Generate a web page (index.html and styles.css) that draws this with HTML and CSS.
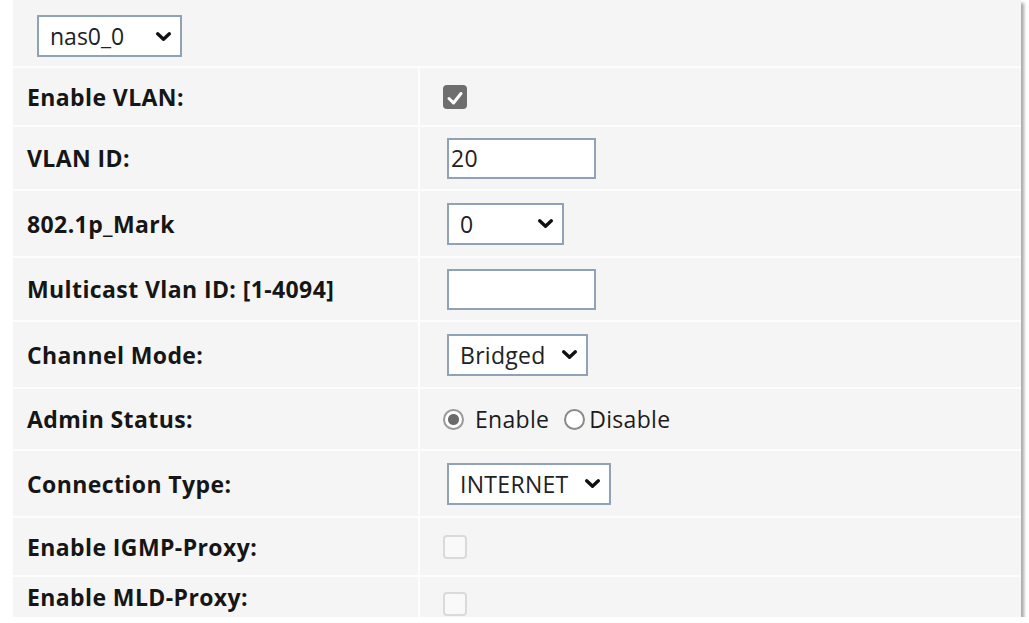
FILE: index.html
```html
<!DOCTYPE html>
<html lang="en">
<head>
    <meta charset="UTF-8">
    <meta name="viewport" content="width=device-width, initial-scale=1.0">
    <link rel="stylesheet" href="styles.css">
</head>
<body>

<div id="panel">
    <div class="row top">
        <span class="select ifaceSelect">nas0_0
            <svg class="chev" viewBox="0 0 16 10"><path d="M2.5 2.5 L8 7.5 L13.5 2.5" /></svg>
        </span>
    </div>

    <div class="row short">
        <div class="label">Enable VLAN:</div>
        <div class="value"><span class="check on">
            <svg viewBox="0 0 24 24"><path d="M6 12.5 L10.5 17 L18 7.5" /></svg>
        </span></div>
    </div>

    <div class="row">
        <div class="label">VLAN ID:</div>
        <div class="value"><span class="textbox">20</span></div>
    </div>

    <div class="row tall">
        <div class="label">802.1p_Mark</div>
        <div class="value"><span class="select markSelect">0
            <svg class="chev" viewBox="0 0 16 10"><path d="M2.5 2.5 L8 7.5 L13.5 2.5" /></svg>
        </span></div>
    </div>

    <div class="row">
        <div class="label">Multicast Vlan ID: [1-4094]</div>
        <div class="value"><span class="textbox"></span></div>
    </div>

    <div class="row tall">
        <div class="label">Channel Mode:</div>
        <div class="value"><span class="select">Bridged
            <svg class="chev" viewBox="0 0 16 10"><path d="M2.5 2.5 L8 7.5 L13.5 2.5" /></svg>
        </span></div>
    </div>

    <div class="row radioRow">
        <div class="label">Admin Status:</div>
        <div class="value">
            <span class="radio on"></span><span class="radioText first">Enable</span>
            <span class="radio"></span><span class="radioText">Disable</span>
        </div>
    </div>

    <div class="row tall">
        <div class="label">Connection Type:</div>
        <div class="value"><span class="select">INTERNET
            <svg class="chev" viewBox="0 0 16 10"><path d="M2.5 2.5 L8 7.5 L13.5 2.5" /></svg>
        </span></div>
    </div>

    <div class="row short">
        <div class="label">Enable IGMP-Proxy:</div>
        <div class="value"><span class="check off"></span></div>
    </div>

    <div class="row last">
        <div class="label">Enable MLD-Proxy:</div>
        <div class="value"><span class="check off"></span></div>
    </div>
</div>

</body>
</html>
```

FILE: styles.css
```css
body {
    margin: 0;
    background: #fff;
    font-family: "Open Sans", "Noto Sans", sans-serif;
    color: #1c1c1c;
}
#panel {
    margin-left: 13px;
    width: 1008px;
    height: 617px;
    overflow: hidden;
    background: #f5f5f5;
    box-shadow: 3px 3px 3px #a9a9a9;
}
.row {
    display: grid;
    grid-template-columns: 407px 1fr;
    height: 62px;
    border-bottom: 2px solid #fdfdfd;
}
.row.tall {
    height: 65px;
}
.row.short {
    height: 57px;
}
.row.radioRow {
    height: 60px;
}
.row.last {
    height: 40px;
    border-bottom: none;
}
.row.last .value {
    align-items: flex-start;
    padding-top: 15px;
}
.row.top {
    display: flex;
    align-items: center;
    box-sizing: border-box;
    height: 68px;
    padding: 6px 0 0 24px;
}
.label {
    display: flex;
    align-items: center;
    padding-left: 14px;
    font-weight: 700;
    font-size: 23px;
    letter-spacing: 0.4px;
    color: #161616;
    border-right: 2px solid #fdfdfd;
}
.value {
    display: flex;
    align-items: center;
    padding-left: 27px;
    font-size: 23px;
    letter-spacing: 0.3px;
}
.select, .textbox {
    display: inline-flex;
    align-items: center;
    box-sizing: border-box;
    height: 42px;
    background: #fff;
    border: 2px solid #8fa2b6;
    padding: 0 8px 0 11px;
    color: #222;
    font-size: 23px;
}
.textbox {
    width: 149px;
    height: 41px;
    padding-left: 2px;
}
.select {
    gap: 15px;
}
.ifaceSelect {
    width: 145px;
    justify-content: space-between;
}
.markSelect {
    width: 117px;
    justify-content: space-between;
}
.chev {
    width: 17px;
    height: 11px;
}
.chev path {
    fill: none;
    stroke: #111;
    stroke-width: 3.2;
    stroke-linecap: round;
    stroke-linejoin: round;
}
.check {
    display: inline-block;
    box-sizing: border-box;
    width: 24px;
    height: 24px;
    margin-left: -4px;
    border-radius: 4px;
}
.check.on {
    background: #6e6e6e;
}
.check.on svg {
    width: 24px;
    height: 24px;
}
.check.on path {
    fill: none;
    stroke: #fff;
    stroke-width: 3;
    stroke-linecap: round;
    stroke-linejoin: round;
}
.check.off {
    border: 2px solid #dadada;
    background: #f9f9f9;
}
.radio {
    display: inline-block;
    box-sizing: border-box;
    width: 21px;
    height: 21px;
    margin-left: -4px;
    border: 2px solid #8a8a8a;
    border-radius: 50%;
    background: #fff;
}
.radio.on {
    border-color: #999;
    background: radial-gradient(circle, #6b6b6b 0 5px, #fff 6px);
}
.radioText {
    margin-left: 4px;
}
.radioText.first {
    margin: 0 15px 0 11px;
}
.radioText + .radio {
    margin-left: 0;
}
```
